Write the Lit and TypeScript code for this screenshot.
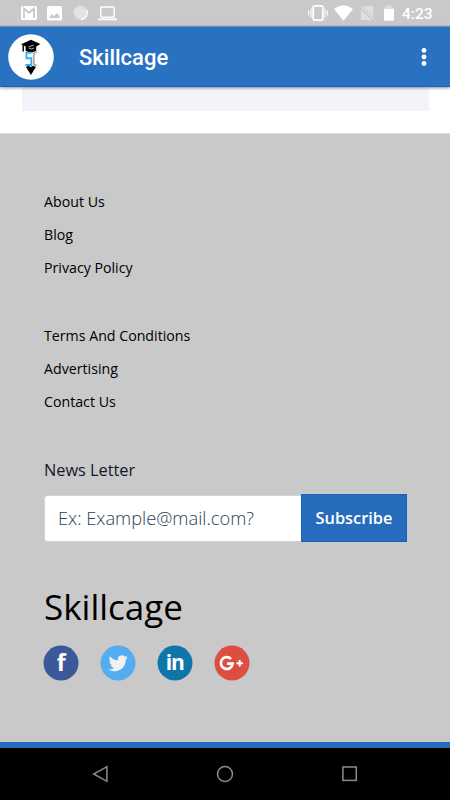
import { LitElement, css, html } from 'lit'
import { customElement } from 'lit/decorators.js'

@customElement('status-bar')
export class StatusBar extends LitElement {
  render() {
    return html`
      <svg class="mail" width="16" height="14" viewBox="0 0 16 14">
        <rect width="16" height="14" rx="1.5" fill="#fff" />
        <path d="M3 12V2.5l5 4.3 5-4.3V12" fill="none" stroke="#c9c9c9" stroke-width="1.8" />
      </svg>
      <svg class="photo" width="15" height="15" viewBox="0 0 15 15">
        <rect width="15" height="14.5" rx="1.5" fill="#fff" />
        <path d="M2 12l3-4 2 2.3L10 7l3.4 5z" fill="#c9c9c9" />
      </svg>
      <svg class="sync" width="16" height="16" viewBox="0 0 16 16">
        <circle cx="7.5" cy="7.5" r="6.5" fill="#e2e2e2" />
        <circle cx="7.5" cy="7.5" r="6.7" fill="none" stroke="#ececec" stroke-dasharray="1 1" />
        <path d="M14 5a7 7 0 0 1-6 9.5" fill="none" stroke="#fff" stroke-width="1.3" />
      </svg>
      <svg class="laptop" width="19" height="15" viewBox="0 0 19 15">
        <rect x="2.8" y="1" width="13.4" height="10.2" rx="1" fill="none" stroke="#fff" stroke-width="1.5" />
        <path d="M0 12.6h19v.6q0 1-1 1H1q-1 0-1-1z" fill="#fff" />
      </svg>
      <span class="space"></span>
      <svg class="vibrate" width="20" height="16" viewBox="0 0 20 16">
        <rect x="5.2" y=".9" width="9.6" height="14.2" rx="1.2" fill="none" stroke="#fff" stroke-width="1.8" />
        <path d="M.6 5.5v5M3 3.5v9M17 3.5v9M19.4 5.5v5" stroke="#fff" stroke-width="1.1" />
      </svg>
      <svg class="wifi" width="19" height="16" viewBox="0 0 19 16">
        <path d="M0 4Q9.5-3.3 19 4L9.5 15.7z" fill="#fff" />
      </svg>
      <svg class="sim" width="15" height="16" viewBox="0 0 15 16">
        <path d="M5 .7h7.3q1 0 1 1V12L3.4 2.3zM1 4.6L11.5 15H2q-1 0-1-1z" fill="#dedede" />
        <path d="M.8 1.5l13.2 13" stroke="#dedede" stroke-width="1.1" />
      </svg>
      <svg class="battery" width="10" height="16" viewBox="0 0 10 16">
        <path d="M0 3.2q0-1 1-1h2V.3h4v1.9h2q1 0 1 1v1H0z" fill="#dedede" />
        <path d="M0 4h10v10.7q0 1-1 1H1q-1 0-1-1z" fill="#fff" />
      </svg>
      <span class="time">4:23</span>
    `
  }

  static styles = css`
    :host {
      display: flex;
      align-items: center;
      box-sizing: border-box;
      height: 26px;
      padding: 0 17px 0 21px;
      background: #c9c9c9;
      color: #fff;
      font: 500 15.5px/26px Roboto, sans-serif;
    }

    svg {
      flex: none;
    }

    .photo {
      margin-left: 10px;
    }

    .sync {
      margin-left: 11px;
    }

    .laptop {
      margin-left: 9px;
    }

    .space {
      flex: 1;
    }

    .wifi {
      margin-left: 6px;
    }

    .sim {
      margin-left: 7px;
    }

    .battery {
      margin-left: 9px;
    }

    .time {
      width: 31px;
      margin-left: 8px;
      padding-top: 2px;
      white-space: nowrap;
    }
  `
}

@customElement('title-bar')
export class TitleBar extends LitElement {
  render() {
    return html`
      <svg class="logo" width="46" height="46" viewBox="0 0 46 46">
        <circle cx="23" cy="23" r="22.8" fill="#fff" />
        <path d="M13 10.3L23 5.8l9.4 4.2-4.2 2.4v4.4q-5.4 3.4-10.6 0v-4.2z" />
        <path d="M15.2 11v6.5" stroke="#000" stroke-width="1.5" />
        <path d="M20.5 12.8l5.2-1.6M20.8 14q2.4 2 5.4 0" fill="none" stroke="#ddd" stroke-width=".8" />
        <path d="M24.5 18.6h-6v5.6h4.8v6.8h-5.8" fill="none" stroke="#29b6ee" stroke-width="1.9" />
        <path d="M29 17.4l-3.2 2.2v10.8l2.8 1.2" fill="none" stroke="#aaa" stroke-width="1.7" />
        <path d="M18 33l2.3-1.2 2.5 1.2 2.6-1.2 2.5 1.2-5 8z" />
      </svg>
      <span class="title">Skillcage</span>
      <svg class="menu" width="6" height="20" viewBox="0 0 6 20">
        <circle cx="3" cy="3.4" r="2.4" />
        <circle cx="3" cy="10" r="2.4" />
        <circle cx="3" cy="16.5" r="2.4" />
      </svg>
    `
  }

  static styles = css`
    :host {
      position: relative;
      display: flex;
      align-items: center;
      box-sizing: border-box;
      height: 61px;
      padding: 0 23px 0 7.5px;
      background: #2971c1;
      border-top: 1px solid #5f8fc6;
      border-bottom: 1px solid #0d67c1;
      box-shadow: 0 1px 3px rgba(0, 0, 0, 0.45);
    }

    .title {
      flex: 1;
      margin: 2px 0 0 25.5px;
      color: #fff;
      font: 500 22px/30px Roboto, sans-serif;
    }

    .menu {
      fill: #fff;
    }
  `
}

@customElement('social-links')
export class SocialLinks extends LitElement {
  render() {
    return html`
      <svg viewBox="0 0 36 36">
        <circle cx="18" cy="18" r="17.5" fill="#3b5998" />
        <text x="13.7" y="26" class="f">f</text>
      </svg>
      <svg viewBox="0 0 36 36">
        <circle cx="18" cy="18" r="17.5" fill="#55acee" />
        <path
          d="M27.8 12.3q-1 .5-2.2.6 1.2-.8 1.7-2.1-1.2.7-2.5.9a3.95 3.95 0 0 0-6.8 3.6q-5-.3-8.1-4.1c-1.1 1.9-.5 4.1 1.2 5.3q-.9 0-1.8-.5c0 2 1.4 3.5 3.2 3.9q-.9.2-1.8.1c.5 1.6 2 2.7 3.7 2.7q-2.5 2-5.8 1.7c7.8 4.8 17.4-.4 17.2-9.9q1.3-.9 2-2.2z"
          fill="#f1f2f2"
        />
      </svg>
      <svg viewBox="0 0 36 36">
        <circle cx="18" cy="18" r="17.5" fill="#0e76a8" />
        <text x="8.8" y="24.5" class="in" textLength="19">in</text>
      </svg>
      <svg viewBox="0 0 36 36">
        <circle cx="18" cy="18" r="17.5" fill="#dc4e41" />
        <path
          d="M17 14A5.9 5.9 0 1 0 18.6 18.6H13"
          fill="none"
          stroke="#fff"
          stroke-width="2.7"
        />
        <path d="M22.5 18.3h6.4M25.7 15.1v6.4" stroke="#fff" stroke-width="2" />
      </svg>
    `
  }

  static styles = css`
    :host {
      display: flex;
      gap: 21px;
    }

    svg {
      width: 36px;
      height: 36px;
    }

    text {
      fill: #fff;
      font-family: 'Open Sans', sans-serif;
      font-weight: 700;
    }

    .f {
      font-size: 23px;
    }

    .in {
      font-size: 21px;
    }
  `
}

@customElement('page-footer')
export class PageFooter extends LitElement {
  links = [
    ['About Us', 'Blog', 'Privacy Policy'],
    ['Terms And Conditions', 'Advertising', 'Contact Us'],
  ]

  render() {
    return html`
      ${this.links.map(
        (group) => html`<nav>${group.map((link) => html`<a>${link}</a>`)}</nav>`
      )}
      <label>News Letter</label>
      <form>
        <input type="email" placeholder="Ex: Example@mail.com?" />
        <button type="button">Subscribe</button>
      </form>
      <h2>Skillcage</h2>
      <social-links></social-links>
    `
  }

  static styles = css`
    :host {
      display: block;
      flex: 1;
      box-sizing: border-box;
      padding: 51px 43px 0 44px;
      background: #c9c9c9;
      border-top: 1px solid #dcdcdc;
      color: #000;
      font-family: 'Open Sans', sans-serif;
    }

    nav {
      margin-bottom: 35px;
    }

    a {
      display: block;
      font-size: 14.2px;
      line-height: 33px;
    }

    label {
      display: block;
      color: #111827;
      font-size: 16.3px;
      line-height: 34px;
    }

    form {
      display: flex;
      align-items: center;
      height: 48px;
      margin: 7px 0 0;
    }

    input {
      flex: 1;
      min-width: 0;
      height: 47px;
      box-sizing: border-box;
      padding: 0 13px 2px;
      border: 1px solid #ced4da;
      border-right: 0;
      border-radius: 4px 0 0 4px;
      background: #fff;
      font: 300 18.25px 'Open Sans', sans-serif;
    }

    input::placeholder {
      color: #2c4156;
      opacity: 1;
    }

    button {
      width: 106px;
      height: 48px;
      padding: 0 0 1px;
      border: 1px solid #1765b8;
      background: #256dbc;
      color: #fff;
      font: 600 16.4px 'Open Sans', sans-serif;
    }

    h2 {
      margin: 40px 0 13px;
      font-size: 35px;
      font-weight: 400;
      line-height: 50px;
    }

    social-links {
      margin-left: -1px;
    }
  `
}

@customElement('nav-bar')
export class NavBar extends LitElement {
  render() {
    return html`
      <svg viewBox="0 0 18 18"><path d="M15.9 1.7v14.6L2.7 9z" /></svg>
      <svg viewBox="0 0 18 18"><circle cx="9" cy="9" r="7.5" /></svg>
      <svg viewBox="0 0 18 18"><rect x="1.9" y="2" width="13.4" height="13.4" /></svg>
    `
  }

  static styles = css`
    :host {
      display: flex;
      align-items: center;
      justify-content: center;
      gap: 107px;
      box-sizing: border-box;
      height: 58px;
      border-top: 6px solid #256dbc;
      background: #000;
    }

    svg {
      width: 18px;
      height: 18px;
      fill: none;
      stroke: #8c8c8c;
      stroke-width: 1.5;
    }
  `
}

@customElement('app-root')
export class AppRoot extends LitElement {
  render() {
    return html`
      <status-bar></status-bar>
      <title-bar></title-bar>
      <main><div class="card"></div></main>
      <page-footer></page-footer>
      <nav-bar></nav-bar>
    `
  }

  static styles = css`
    :host {
      display: flex;
      flex-direction: column;
      width: 450px;
      height: 800px;
      overflow: hidden;
      background: #fff;
    }

    main {
      height: 46px;
      padding: 0 21px 0 22px;
    }

    .card {
      height: 24px;
      background: #f2f4f9;
    }
  `
}

declare global {
  interface HTMLElementTagNameMap {
    'app-root': AppRoot
    'status-bar': StatusBar
    'title-bar': TitleBar
    'social-links': SocialLinks
    'page-footer': PageFooter
    'nav-bar': NavBar
  }
}
